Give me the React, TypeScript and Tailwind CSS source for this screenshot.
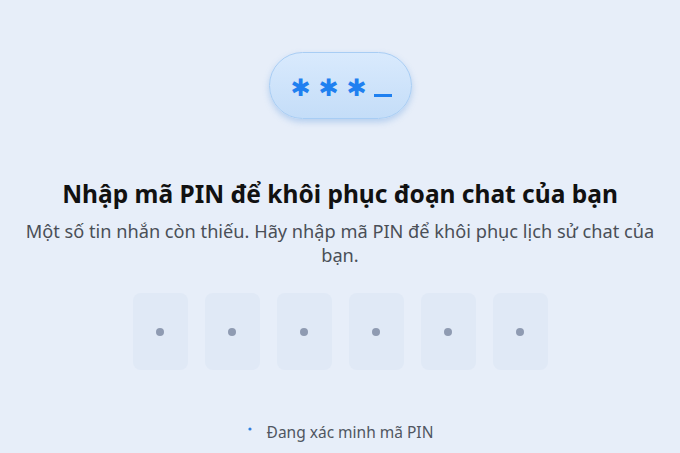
import React from "react";

const slots = [0, 1, 2, 3, 4, 5];

export default function App() {
  return (
    <div
      className="flex h-[453px] w-full flex-col items-center bg-[#e7eef9] text-center"
      style={{ fontFamily: '"Noto Sans", "Open Sans", sans-serif' }}
    >
      {/* masked PIN bubble */}
      <div className="mt-[52px] flex h-[67px] w-[143px] items-center justify-center rounded-full border border-[#a8cdf4] bg-gradient-to-b from-[#d9eafd] to-[#c4ddf8] shadow-[0_3px_6px_rgba(90,150,220,0.35)]">
        <div
          className="flex items-center pr-[2px] text-[#1f80f0]"
          style={{ fontFamily: '"DejaVu Sans", sans-serif' }}
        >
          <span className="w-[28px] translate-y-[2px] text-[24px] leading-none">✱</span>
          <span className="w-[28px] translate-y-[2px] text-[24px] leading-none">✱</span>
          <span className="w-[28px] translate-y-[2px] text-[24px] leading-none">✱</span>
          <span className="ml-[3px] mt-[20px] h-[3px] w-[18px] bg-[#1f80f0]" />
        </div>
      </div>

      <h1 className="mt-[60px] text-[24.5px] font-bold leading-[30px] text-[#111111]">
        Nhập mã PIN để khôi phục đoạn chat của bạn
      </h1>
      <p className="mt-[10px] w-[660px] text-[18.2px] leading-[24px] text-[#4a4f57]">
        Một số tin nhắn còn thiếu. Hãy nhập mã PIN để khôi phục lịch sử chat của bạn.
      </p>

      {/* six PIN slots */}
      <div className="mt-[26px] flex gap-[17px]">
        {slots.map((i) => (
          <div
            key={i}
            className="flex h-[77px] w-[55px] items-center justify-center rounded-[8px] bg-[#e0e9f6]"
          >
            <span className="h-[8px] w-[8px] rounded-full bg-[#8f9bb2]" />
          </div>
        ))}
      </div>

      {/* verifying status */}
      <div className="mt-[52px] flex items-center gap-[14px] text-[15.5px] leading-[20px] text-[#505661]">
        <svg width="6" height="6" viewBox="0 0 6 6" className="-translate-y-[3px]">
          <circle cx="3" cy="3" r="1.6" fill="#2f7fe0" />
        </svg>
        <span>Đang xác minh mã PIN</span>
      </div>
    </div>
  );
}
